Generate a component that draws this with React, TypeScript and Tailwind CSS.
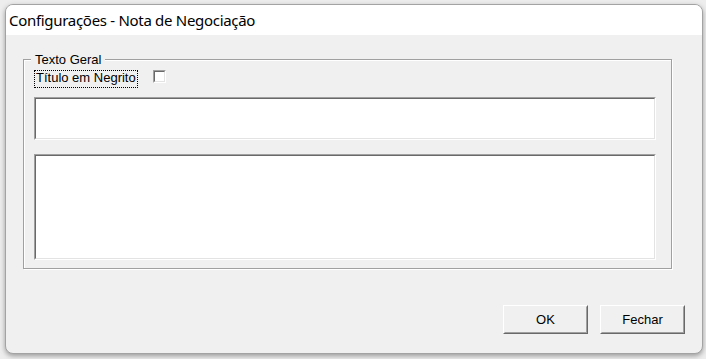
import React from "react";

const sans = { fontFamily: '"Liberation Sans", Arial, sans-serif' };

function Sunken({ h }: { h: string }) {
  return (
    <div className={`w-[622px] ${h} border border-t-[#a0a0a0] border-l-[#a0a0a0] border-r-white border-b-white`}>
      <div className="w-full h-full bg-white border border-t-[#696969] border-l-[#696969] border-r-[#e3e3e3] border-b-[#e3e3e3]" />
    </div>
  );
}

function Btn({ label }: { label: string }) {
  return (
    <button className="w-[85px] h-[29px] border border-t-white border-l-white border-r-[#696969] border-b-[#696969] bg-[#f0f0f0] p-0">
      <div className="w-full h-full border border-t-[#f0f0f0] border-l-[#f0f0f0] border-r-[#a0a0a0] border-b-[#a0a0a0] flex items-center justify-center text-[13px] text-black" style={sans}>
        {label}
      </div>
    </button>
  );
}

export default function App() {
  return (
    <div className="w-[706px] h-[359px] bg-[#ededed] pt-[4px] pl-[5px] overflow-hidden">
      <div className="w-[698px] h-[350px] rounded-[8px] border border-[#a3a3a3] bg-[#f0f0f0] overflow-hidden flex flex-col shadow-[0_2px_5px_rgba(0,0,0,0.35)]">
        <div className="h-[30px] bg-white flex items-center pl-[3px] pt-[1px] shrink-0">
          <span className="text-[15px] tracking-[-0.3px] text-black leading-none" style={{ fontFamily: '"Noto Sans", sans-serif' }}>
            Configurações - Nota de Negociação
          </span>
        </div>
        <div className="flex flex-col pl-[17px] pt-[24px]">
          <div className="relative w-[649px] h-[210px] border border-[#a0a0a0] shadow-[inset_1px_1px_0_#fff,1px_1px_0_#fff] pl-[10px] pt-[10px]">
            <span className="absolute left-[7px] top-[-8px] px-[4px] bg-[#f0f0f0] text-[13px] leading-[16px] text-black" style={sans}>
              Texto Geral
            </span>
            <div className="flex items-start h-[18px]">
              <span className="h-[18px] border border-dotted border-black pl-[1px] pr-[1px] text-[13px] leading-[14px] text-black" style={sans}>
                Título em Negrito
              </span>
              <span className="ml-[15px] w-[13px] h-[13px] border border-t-[#a0a0a0] border-l-[#a0a0a0] border-r-white border-b-white">
                <span className="block w-full h-full bg-white border border-t-[#696969] border-l-[#696969] border-r-[#e3e3e3] border-b-[#e3e3e3]" />
              </span>
            </div>
            <div className="mt-[9px]">
              <Sunken h="h-[43px]" />
            </div>
            <div className="mt-[14px]">
              <Sunken h="h-[106px]" />
            </div>
          </div>
          <div className="flex justify-end gap-[12px] mt-[36px] pr-[17px]">
            <Btn label="OK" />
            <Btn label="Fechar" />
          </div>
        </div>
      </div>
    </div>
  );
}
